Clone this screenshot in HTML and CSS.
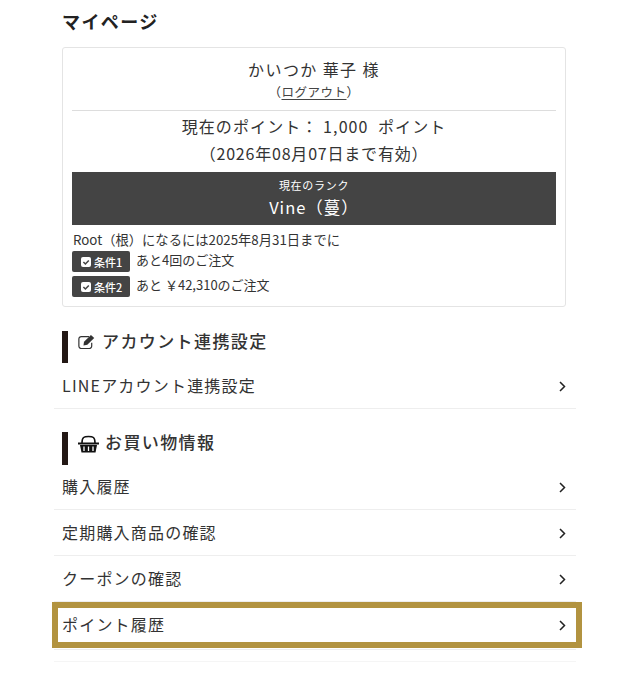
FILE: index.html
```html
<!DOCTYPE html>
<html lang="ja">
<head>
<meta charset="utf-8">
<title>マイページ</title>
<link rel="stylesheet" href="styles.css">
</head>
<body>
<main class="page">
  <h1 class="title">マイページ</h1>
  <section class="card">
    <p class="name">かいつか 華子 様</p>
    <p class="logout">（<a href="#">ログアウト</a>）</p>
    <hr class="rule">
    <p class="points">現在のポイント： 1,000&nbsp; ポイント</p>
    <p class="points points-date">（2026年08月07日まで有効）</p>
    <div class="rank">
      <div class="rank-label">現在のランク</div>
      <div class="rank-name">Vine（蔓）</div>
    </div>
    <p class="next">Root（根）になるには2025年8月31日までに</p>
    <div class="cond">
      <span class="tag"><svg class="check" viewBox="0 0 10 10"><rect width="10" height="10" rx="2" fill="#fff"/><path d="M2.4 5l2 2 3.4-3.6" fill="none" stroke="#444" stroke-width="1.5"/></svg>条件1</span>
      <span class="cond-text">あと4回のご注文</span>
    </div>
    <div class="cond">
      <span class="tag"><svg class="check" viewBox="0 0 10 10"><rect width="10" height="10" rx="2" fill="#fff"/><path d="M2.4 5l2 2 3.4-3.6" fill="none" stroke="#444" stroke-width="1.5"/></svg>条件2</span>
      <span class="cond-text">あと ￥42,310のご注文</span>
    </div>
  </section>

  <h2 class="heading">
    <svg class="h-icon" viewBox="0 0 15.500 14"><path d="M12.500 8v3a2.200 2.200 0 0 1-2.200 2.200H3A2.200 2.200 0 0 1 .8 11V4.500A2.200 2.200 0 0 1 3 2.300h7" fill="none" stroke="#333" stroke-width="1.100"/><path d="M5.500 7L11.800 .8l3 2.800L8.500 9.800l-3.500.6z" fill="#333"/></svg>
    アカウント連携設定
  </h2>
  <a class="row" href="#">LINEアカウント連携設定<svg class="chev" viewBox="0 0 7 11"><path d="M1 1l4.500 4.500L1 10" fill="none" stroke="#222" stroke-width="1.500"/></svg></a>

  <h2 class="heading heading-second">
    <svg class="h-icon h-basket" viewBox="0 0 21 18"><path d="M4 8C4 2 6 1.500 10.500 1.500S17 2 17 8" fill="none" stroke="#111" stroke-width="1.600"/><path d="M0 7.500h21v2H0z" fill="#111"/><path d="M2 10h17l-1.500 7.500h-14z" fill="#111"/><path d="M6 11.500v4.500M10.500 11.500v4.500M15 11.500v4.500" stroke="#fff" stroke-width="1.300"/></svg>
    お買い物情報
  </h2>
  <a class="row" href="#">購入履歴<svg class="chev" viewBox="0 0 7 11"><path d="M1 1l4.500 4.500L1 10" fill="none" stroke="#222" stroke-width="1.500"/></svg></a>
  <a class="row" href="#">定期購入商品の確認<svg class="chev" viewBox="0 0 7 11"><path d="M1 1l4.500 4.500L1 10" fill="none" stroke="#222" stroke-width="1.500"/></svg></a>
  <a class="row" href="#">クーポンの確認<svg class="chev" viewBox="0 0 7 11"><path d="M1 1l4.500 4.500L1 10" fill="none" stroke="#222" stroke-width="1.500"/></svg></a>
  <a class="row row-marked" href="#">ポイント履歴<svg class="chev" viewBox="0 0 7 11"><path d="M1 1l4.500 4.500L1 10" fill="none" stroke="#222" stroke-width="1.500"/></svg><span class="mark"></span></a>
  <div class="line"></div>
  <div class="faint"></div>
</main>
</body>
</html>
```
FILE: styles.css
```css
* { box-sizing: border-box; }
html, body { margin: 0; background: #fff; }
body {
  font-family: "Noto Sans CJK JP", "Noto Sans", sans-serif;
  color: #333;
  height: 680px;
  overflow: hidden;
}
p { margin: 0; }
.page { width: 522px; margin-left: 54px; }
.title {
  margin: 0;
  padding: 8px 0 0 8px;
  height: 47px;
  font-size: 18px;
  line-height: 26px;
  font-weight: 700;
  color: #222;
  letter-spacing: 1.400px;
}
.card {
  width: 504px;
  height: 260px;
  margin-left: 8px;
  padding: 9px 9px 0;
  border: 1px solid #e4e4e4;
  border-radius: 3px;
  text-align: center;
}
.name { font-size: 16px; line-height: 24px; letter-spacing: 1.400px; }
.logout { font-size: 12.500px; line-height: 22px; letter-spacing: .5px; }
.logout a { color: #444; text-decoration: underline; text-underline-offset: 2px; }
.rule { margin: 7px 0 2px; border: 0; border-top: 1px solid #ddd; }
.points { font-size: 16px; line-height: 27px; letter-spacing: 1.100px; color: #333; }
.points-date { letter-spacing: .8px; }
.rank {
  margin-top: 5px;
  height: 53px;
  background: #444;
  color: #fff;
  padding-top: 5px;
}
.rank-label { font-size: 11px; line-height: 16px; letter-spacing: .7px; }
.rank-name { font-size: 16.500px; line-height: 28px; letter-spacing: 1px; }
.next { margin-top: 6px; font-size: 13.300px; line-height: 18px; text-align: left; color: #333; padding-left: 1px; }
.cond {
  display: flex;
  align-items: flex-start;
  gap: 6px;
  height: 25px;
  font-size: 13px;
  line-height: 18px;
  text-align: left;
}
.cond-text { margin-top: 2px; }
.tag {
  display: inline-flex;
  align-items: center;
  gap: 3px;
  width: 58px;
  height: 21px;
  margin-top: 2px;
  padding-left: 9px;
  background: #444;
  color: #fff;
  border-radius: 2px;
  font-size: 11px;
  font-weight: 500;
}
.check { width: 10px; height: 10px; }
.heading {
  display: flex;
  align-items: flex-start;
  margin: 24px 0 0 8px;
  height: 32px;
  padding-left: 10px;
  border-left: 6px solid #231815;
  font-size: 17px;
  line-height: 20px;
  font-weight: 500;
  letter-spacing: 1.400px;
  color: #333;
}
.heading-second { margin-top: 23px; height: 33px; margin-bottom: -1px; }
.h-icon { width: 17px; height: 15.400px; margin: 3px 7px 0 0; flex: none; }
.h-basket { width: 21px; height: 18px; margin: 3px 6px 0 0; }
.row {
  position: relative;
  display: flex;
  align-items: center;
  justify-content: space-between;
  height: 46px;
  padding: 0 10px 2px 8px;
  border-bottom: 1px solid #eee;
  color: #333;
  font-size: 16px;
  letter-spacing: 1.200px;
  text-decoration: none;
}
.chev { width: 7px; height: 11px; margin-top: 4px; }
.mark {
  position: absolute;
  left: -2px;
  top: 0;
  width: 530px;
  height: 46px;
  border: 6px solid #b29340;
}
.line { margin-top: 1px; border-top: 1px solid #eee; }
.faint { margin-top: 11px; border-top: 1px solid #f5f5f5; }
```
